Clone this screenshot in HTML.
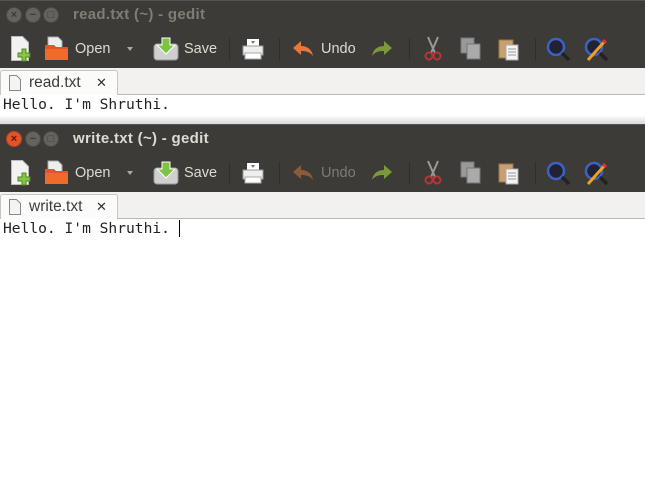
<!DOCTYPE html>
<html><head><style>
*{margin:0;padding:0;box-sizing:border-box}
body{width:645px;height:470px;overflow:hidden;background:#fff;font-family:"Liberation Sans","DejaVu Sans",sans-serif;position:relative}
.win{position:absolute;left:0;width:645px}
.tb{position:absolute;left:0;top:0;width:645px;height:29px;background:#3c3b37;border-top:1px solid #55534e}
.btn{position:absolute;top:6px;width:16px;height:16px;border-radius:50%;background:#65635d;border:1px solid #4a4945}
.btn i{position:absolute;font-style:normal;color:#3c3b37;font-size:11px;line-height:14px;width:14px;text-align:center;font-weight:bold}
.title{position:absolute;left:73px;top:5px;font-size:15px;font-weight:bold;color:#807d74;letter-spacing:0.3px}
.tool{position:absolute;left:0;top:29px;width:645px;height:39px;background:#3c3b37}
.lbl{position:absolute;top:12px;font-size:14.5px;color:#dfdbd2}
.sep{position:absolute;top:9px;width:1px;height:22px;background:#2f2e2b}
.tabs{position:absolute;left:0;top:68px;width:645px;height:27px;background:#f2f1f0;border-bottom:1px solid #bdbab4}
.tab{position:absolute;left:0;top:2px;width:118px;height:26px;background:#fbfbfa;border:1px solid #c8c5c0;border-bottom:none;border-radius:3px 3px 0 0}
.tab span{position:absolute;left:28px;top:3px;font-size:15.5px;color:#3c3c3c}
.tab b{position:absolute;left:95px;top:4px;font-size:13px;color:#333}
.doc{position:absolute;left:0;width:645px;background:#fff;font-family:"DejaVu Sans Mono","Liberation Mono",monospace;font-size:14.6px;color:#222;padding-left:3px}
svg{position:absolute}
</style></head><body>

<div class="win" style="top:0;height:124px">
<div class="tb">
 <div class="btn" style="left:6px"><i>×</i></div>
 <div class="btn" style="left:25px"><i>−</i></div>
 <div class="btn" style="left:43px"><i>□</i></div>
 <div class="title">read.txt (~) - gedit</div>
</div>
<div class="tool" id="t1"></div>
<div class="tabs"><div class="tab">
 <svg style="left:8px;top:4px" width="12" height="16"><path d="M.5 .5h7l4 4v11h-11z" fill="#f4f4f4" stroke="#888"/></svg>
 <span>read.txt</span><b>✕</b></div></div>
<div class="doc" style="top:95px;height:29px;padding-top:1px;background:linear-gradient(#fff 70%,#d8d8d8)">Hello. I'm Shruthi.</div>
</div>

<div class="win" style="top:124px;height:346px">
<div class="tb">
 <div class="btn" style="left:6px;background:#e5532b;border-color:#b8431f"><i style="color:#5a1a08">×</i></div>
 <div class="btn" style="left:25px"><i>−</i></div>
 <div class="btn" style="left:43px"><i>□</i></div>
 <div class="title" style="color:#dfdbd2">write.txt (~) - gedit</div>
</div>
<div class="tool" id="t2"></div>
<div class="tabs"><div class="tab">
 <svg style="left:8px;top:4px" width="12" height="16"><path d="M.5 .5h7l4 4v11h-11z" fill="#f4f4f4" stroke="#888"/></svg>
 <span>write.txt</span><b>✕</b></div></div>
<div class="doc" style="top:95px;height:260px;padding-top:1px">Hello. I'm Shruthi. <span style="display:inline-block;width:1px;height:17px;background:#000;vertical-align:-4px"></span></div>
</div>

<template id="tt">
 <svg style="left:10px;top:6px" width="22" height="28"><path d="M1.5 1.5h11l6 6v18h-17z" fill="#f2f2f2" stroke="#bbb"/><path d="M12 14h4v4h4v4h-4v4h-4v-4h-4v-4h4z" fill="#8bc34a" stroke="#4e8a1a"/></svg>
 <svg style="left:44px;top:7px" width="26" height="26"><path d="M4 1h10l4 4v8H4z" fill="#eee" stroke="#aaa"/><path d="M1 9h9l2 2h12v13H1z" fill="#e4532a"/><path d="M1 13h23v11H1z" fill="#f06b2a"/></svg>
 <div class="lbl" style="left:75px">Open</div>
 <div style="position:absolute;left:127px;top:18px;border:3px solid transparent;border-top:4px solid #aaa"></div>
 <svg style="left:153px;top:7px" width="26" height="26"><rect x="1" y="8" width="24" height="16" rx="3" fill="#cfcfcf" stroke="#999"/><path d="M9 2h8v7h5l-9 9-9-9h5z" fill="#7dc242" stroke="#fff"/></svg>
 <div class="lbl" style="left:184px">Save</div>
 <div class="sep" style="left:229px"></div>
 <svg style="left:242px;top:8px" width="22" height="24"><rect x="5" y="2" width="12" height="8" fill="#fff"/><rect x="1" y="9" width="20" height="9" fill="#eee" stroke="#999"/><rect x="3" y="16" width="16" height="6" fill="#fff" stroke="#aaa"/><path d="M9 4h4l-2 3z" fill="#777"/></svg>
 <div class="sep" style="left:279px"></div>
 <svg style="left:291px;top:10px" width="24" height="20"><path d="M10 2L2 9l8 7v-4c5 0 9 1 12 5-1-6-5-10-12-10z" fill="ORANGE_UNDO"/></svg>
 <div class="lbl" style="left:321px;color:UNDO_TXT">Undo</div>
 <svg style="left:370px;top:10px" width="24" height="20"><path d="M14 2l8 7-8 7v-4c-5 0-9 1-12 5 1-6 5-10 12-10z" fill="#7a9a3a"/></svg>
 <div class="sep" style="left:409px"></div>
 <svg style="left:424px;top:7px" width="18" height="26"><path d="M4 1l7 16M14 1L7 17" stroke="#999" stroke-width="2"/><circle cx="5" cy="20" r="3.5" fill="none" stroke="#b33" stroke-width="2"/><circle cx="13" cy="20" r="3.5" fill="none" stroke="#b33" stroke-width="2"/></svg>
 <svg style="left:460px;top:8px" width="22" height="24"><rect x="1" y="1" width="13" height="15" fill="#999" stroke="#777"/><rect x="7" y="7" width="13" height="15" fill="#aaa" stroke="#777"/></svg>
 <svg style="left:498px;top:7px" width="22" height="26"><rect x="1" y="4" width="14" height="18" fill="#c8a070" stroke="#97754a"/><rect x="8" y="9" width="12" height="15" fill="#f4f4f4" stroke="#aaa"/><path d="M10 13h8M10 16h8M10 19h8" stroke="#999"/></svg>
 <div class="sep" style="left:535px"></div>
 <svg style="left:546px;top:8px" width="26" height="26"><circle cx="10" cy="10" r="8" fill="#223" stroke="#3a62c8" stroke-width="2.5"/><path d="M16 16l7 7" stroke="#222" stroke-width="3.5"/></svg>
 <svg style="left:584px;top:8px" width="26" height="26"><circle cx="10" cy="10" r="8" fill="#223" stroke="#3a62c8" stroke-width="2.5"/><path d="M16 16l7 7" stroke="#222" stroke-width="3.5"/><path d="M4 23L21 4" stroke="#f0a020" stroke-width="3"/><path d="M19 3l3 3" stroke="#d33" stroke-width="3"/></svg>
</template>
<script>
var t=document.getElementById('tt').innerHTML;
document.getElementById('t1').innerHTML=t.replace('ORANGE_UNDO','#e8783a').replace('UNDO_TXT','#dfdbd2');
document.getElementById('t2').innerHTML=t.replace('ORANGE_UNDO','#8a5a3a').replace('UNDO_TXT','#7e7b74');
</script>
</body></html>
